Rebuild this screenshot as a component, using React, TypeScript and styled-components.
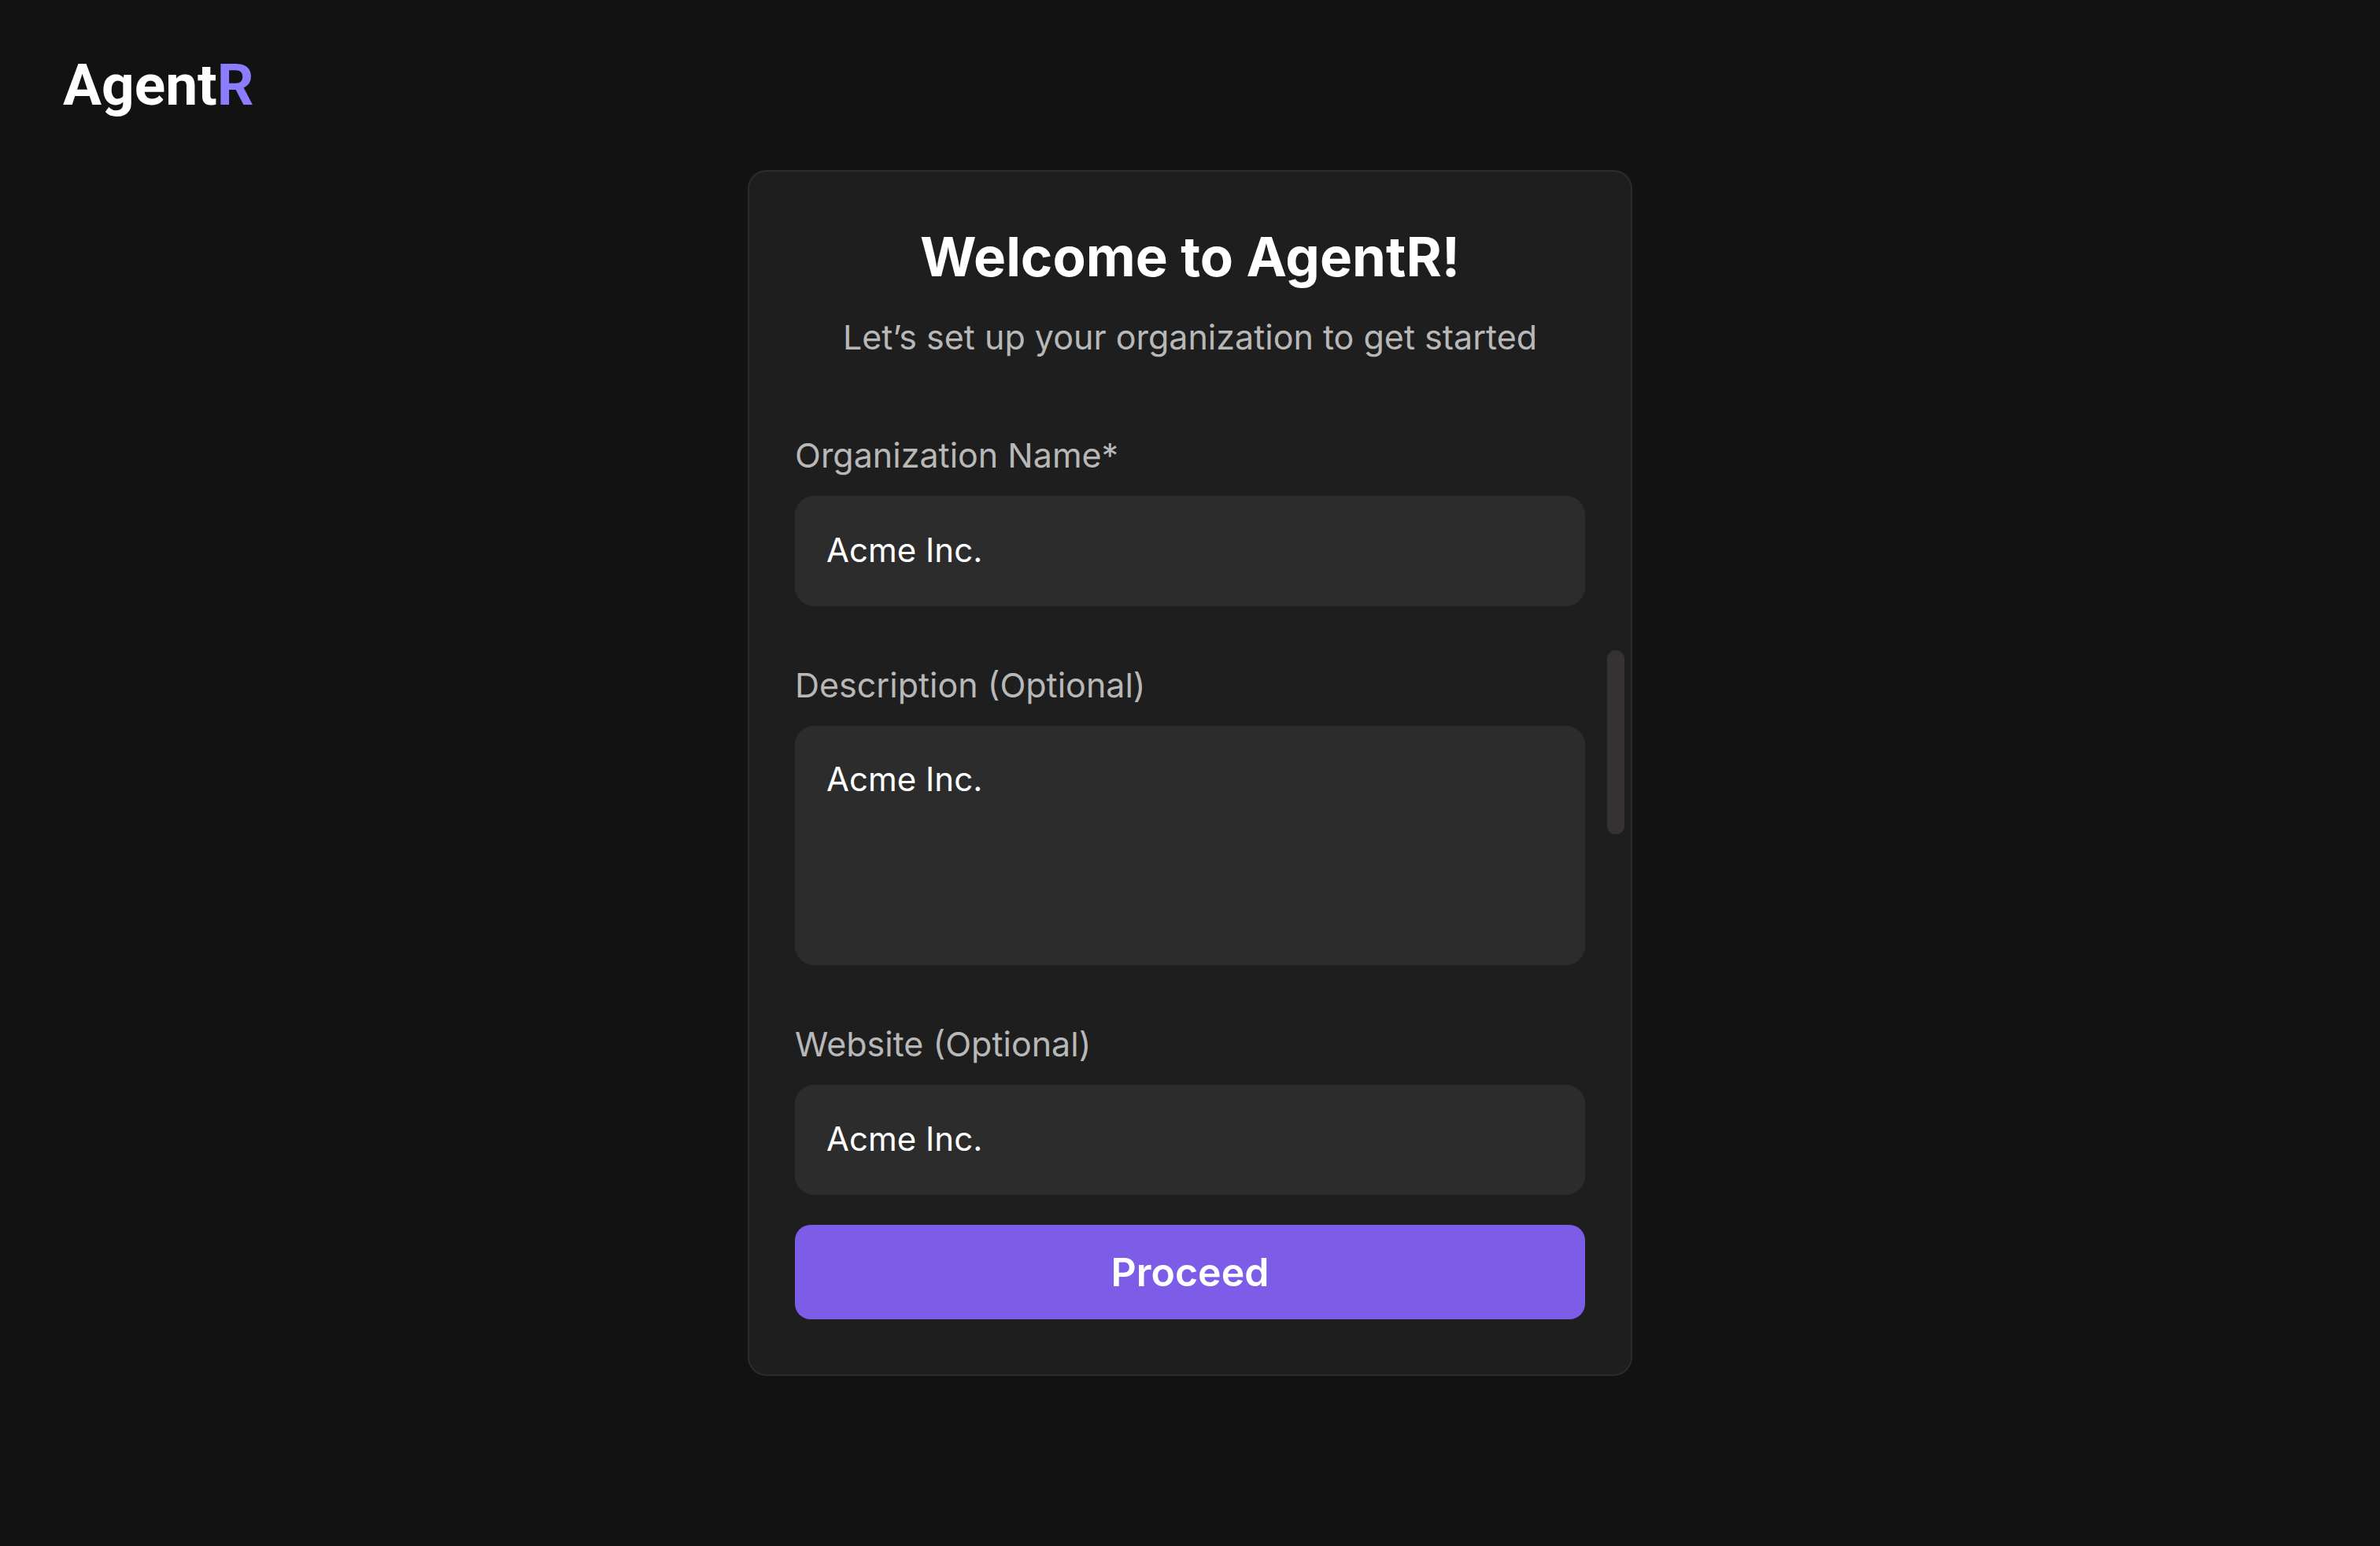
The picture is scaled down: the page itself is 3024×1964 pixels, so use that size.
import React, { useState } from 'react';
import styled, { createGlobalStyle, css } from 'styled-components';

const GlobalStyle = createGlobalStyle`
  *, *::before, *::after {
    box-sizing: border-box;
  }

  body {
    margin: 0;
    background: #121212;
    color: #ffffff;
    font-family: Inter, "Liberation Sans", sans-serif;
  }
`;

const Page = styled.div`
  min-height: 100vh;
  display: flex;
  flex-direction: column;
`;

const Header = styled.header`
  padding: 64px 80px;
`;

const Logo = styled.a`
  display: inline-block;
  color: #ffffff;
  font-family: Roboto, "Liberation Sans", sans-serif;
  font-size: 73px;
  font-weight: 700;
  line-height: 88px;
  text-decoration: none;
  vertical-align: top;
`;

const LogoAccent = styled.span`
  color: #8c7dfc;
`;

const Main = styled.main`
  display: flex;
  justify-content: center;
`;

const Card = styled.section`
  position: relative;
  width: 100%;
  max-width: 1124px;
  padding: 66px 58px 70px;
  border: 2px solid #2c2c2c;
  border-radius: 24px;
  background: #1e1e1e;
`;

const Intro = styled.div`
  display: flex;
  flex-direction: column;
  gap: 30px;
  margin-bottom: 90px;
  text-align: center;
`;

const Title = styled.h1`
  margin: 0;
  font-size: 69px;
  font-weight: 700;
  line-height: 84px;
`;

const Subtitle = styled.p`
  margin: 0;
  color: #b8b8b8;
  font-size: 43px;
  line-height: 60px;
`;

const Form = styled.form`
  display: flex;
  flex-direction: column;
  gap: 38px;
`;

const Fields = styled.div`
  display: flex;
  flex-direction: column;
  gap: 70px;
`;

const Field = styled.div`
  display: flex;
  flex-direction: column;
  gap: 22px;
`;

const Label = styled.label`
  color: #b8b8b8;
  font-size: 43px;
  line-height: 60px;
`;

const controlStyle = css`
  display: block;
  width: 100%;
  padding: 38px 40px 42px;
  border: 0;
  border-radius: 24px;
  outline: 0;
  background: #2c2c2c;
  color: #ffffff;
  font-family: inherit;
  font-size: 42px;
  line-height: 60px;
`;

const TextInput = styled.input`
  ${controlStyle}
  height: 140px;
`;

const TextArea = styled.textarea`
  ${controlStyle}
  height: 304px;
  resize: none;
`;

const SubmitButton = styled.button`
  padding: 30px;
  border: 0;
  border-radius: 20px;
  background: #7d5de8;
  color: #ffffff;
  font-family: inherit;
  font-size: 50px;
  font-weight: 600;
  line-height: 60px;
  cursor: pointer;
`;

const ScrollThumb = styled.div`
  position: absolute;
  top: 608px;
  right: 8px;
  width: 22px;
  height: 234px;
  border-radius: 11px;
  background: #353233;
`;

export default function App() {
  const [name, setName] = useState('Acme Inc.');
  const [description, setDescription] = useState('Acme Inc.');
  const [website, setWebsite] = useState('Acme Inc.');

  return (
    <Page>
      <GlobalStyle />
      <Header>
        <Logo href="#">
          Agent<LogoAccent>R</LogoAccent>
        </Logo>
      </Header>
      <Main>
        <Card>
          <Intro>
            <Title>Welcome to AgentR!</Title>
            <Subtitle>Let’s set up your organization to get started</Subtitle>
          </Intro>
          <Form onSubmit={(event) => event.preventDefault()}>
            <Fields>
              <Field>
                <Label htmlFor="org-name">Organization Name*</Label>
                <TextInput
                  id="org-name"
                  type="text"
                  required
                  value={name}
                  onChange={(event) => setName(event.target.value)}
                />
              </Field>
              <Field>
                <Label htmlFor="org-description">Description (Optional)</Label>
                <TextArea
                  id="org-description"
                  value={description}
                  onChange={(event) => setDescription(event.target.value)}
                />
              </Field>
              <Field>
                <Label htmlFor="org-website">Website (Optional)</Label>
                <TextInput
                  id="org-website"
                  type="text"
                  value={website}
                  onChange={(event) => setWebsite(event.target.value)}
                />
              </Field>
            </Fields>
            <SubmitButton type="submit">Proceed</SubmitButton>
          </Form>
          <ScrollThumb aria-hidden="true" />
        </Card>
      </Main>
    </Page>
  );
}
